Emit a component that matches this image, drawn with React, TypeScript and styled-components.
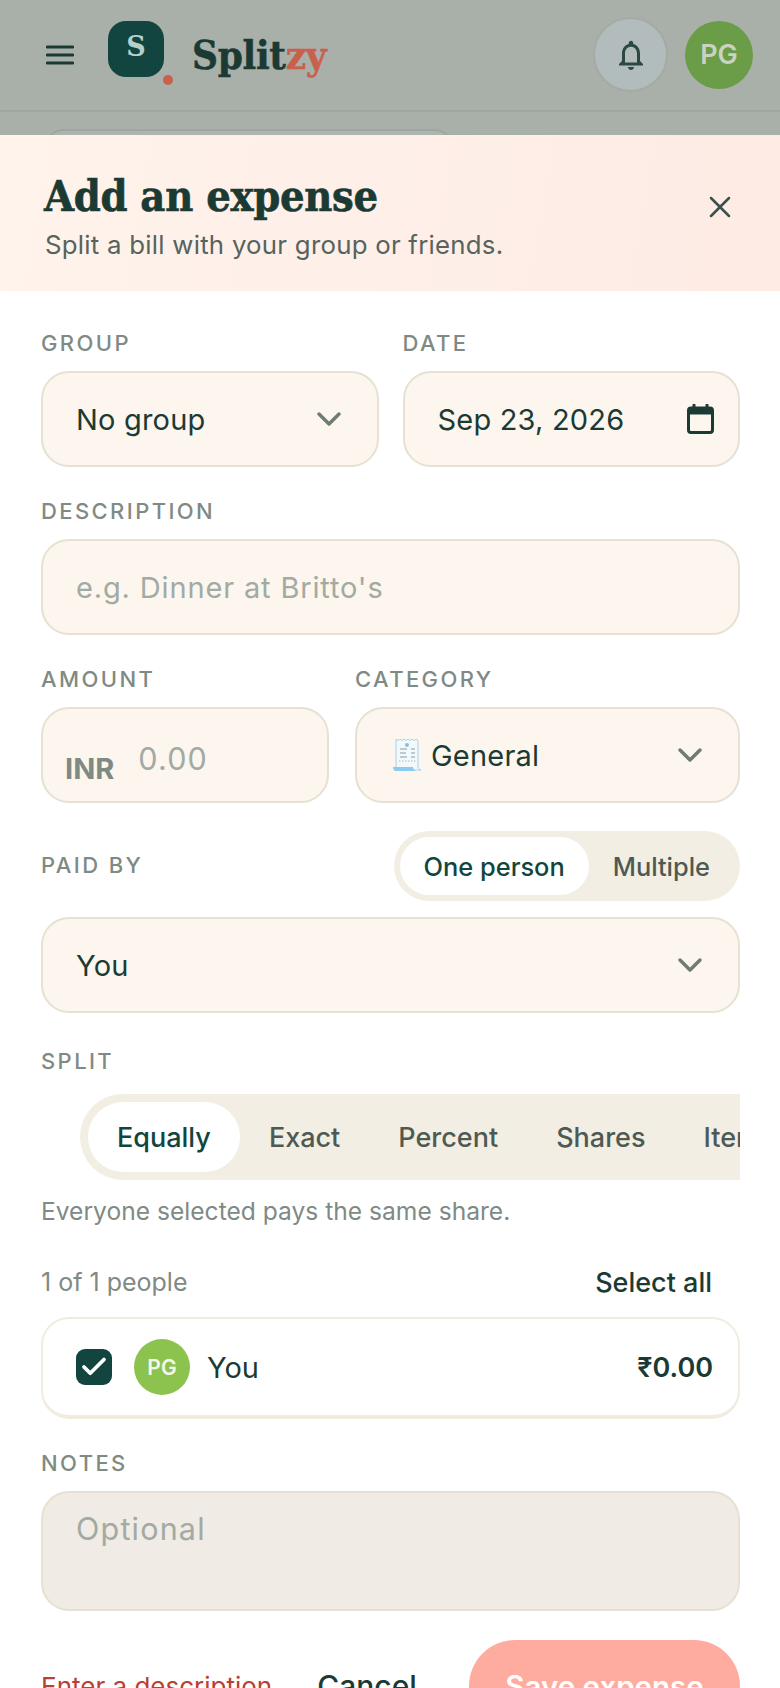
import React, { FC } from 'react';
import styled, { createGlobalStyle } from 'styled-components';
import { Check, ChevronDown, X } from 'lucide-react';

const ink = '#1c3a34';
const teal = '#12453f';
const muted = '#7f8a84';
const faint = '#a2aaa3';
const sans = `Inter, "Noto Sans", sans-serif`;
const serif = `"DejaVu Serif", "Liberation Serif", serif`;

const GlobalStyle = createGlobalStyle`
	* {
		box-sizing: border-box;
	}
	html,
	body {
		margin: 0;
		padding: 0;
		background: #fff;
		font-family: ${sans};
	}
`;

const BurgerIcon: FC = () => (
	<svg width="28" height="20" viewBox="0 0 28 20" fill="none">
		<path d="M1 2h26M1 10h26M1 18h26" stroke={ink} strokeWidth="2.8" strokeLinecap="round" />
	</svg>
);

const BellIcon: FC = () => (
	<svg width="36" height="36" viewBox="0 0 24 24" fill="#2b4841">
		<path d="M12 22c1.1 0 2-.9 2-2h-4c0 1.1.9 2 2 2zm6-6v-5c0-3.07-1.63-5.64-4.5-6.32V4c0-.83-.67-1.5-1.5-1.5s-1.5.67-1.5 1.5v.68C7.64 5.36 6 7.92 6 11v5l-2 2v1h16v-1l-2-2zm-2 1H8v-6c0-2.48 1.51-4.5 4-4.5s4 2.02 4 4.5v6z" />
	</svg>
);

// Small receipt, stands in for the category emoji
const ReceiptIcon: FC = () => (
	<svg width="30" height="34" viewBox="0 0 30 34" fill="none">
		<path d="M4 1l2 1.6L8 1l2 1.6L12 1l2 1.6L16 1l2 1.6L20 1l2 1.6L24 1l2 1.6V28c0 2 1 4 3 4H6c-2 0-2-2-2-4V1z" fill="#f3f8fb" stroke="#a5d3ee" strokeWidth="1" />
		<path d="M1 29h20c0 2 1 3 3 4H4c-2 0-3-2-3-4z" fill="#8ccbf0" />
		<circle cx="15" cy="7" r="2" fill="#8fc0d8" />
		<path d="M8 11h7M19 11h4M8 15h6M19 15h4M8 19h7M19 19h4" stroke="#a9bcc4" strokeWidth="1.4" />
		<path d="M7 23h17" stroke="#a9bcc4" strokeWidth="1.2" strokeDasharray="1.5 1.5" />
	</svg>
);

const CalendarIcon: FC = () => (
	<svg width="27" height="30" viewBox="0 0 27 30" fill="none">
		<path d="M7 1v4M20 1v4" stroke={ink} strokeWidth="3" strokeLinecap="round" />
		<rect x="1.5" y="4" width="24" height="24.5" rx="2.5" stroke={ink} strokeWidth="3" />
		<path d="M1.5 6A2 2 0 0 1 3.5 4h20a2 2 0 0 1 2 2v4.5h-24z" fill={ink} />
	</svg>
);

const App: FC = () => {
	return (
		<Page>
			<GlobalStyle />
			<AppBar>
				<Burger>
					<BurgerIcon />
				</Burger>
				<LogoMark>
					S
					<LogoDot />
				</LogoMark>
				<Brand>
					Split<BrandAccent>zy</BrandAccent>
				</Brand>
				<BarActions>
					<BellButton>
						<BellIcon />
					</BellButton>
					<UserAvatar>PG</UserAvatar>
				</BarActions>
			</AppBar>
			<PeekStrip>
				<PeekCard />
			</PeekStrip>

			<Sheet>
				<SheetHeader>
					<div>
						<Title>Add an expense</Title>
						<Subtitle>Split a bill with your group or friends.</Subtitle>
					</div>
					<CloseButton>
						<X size={36} strokeWidth={1.7} />
					</CloseButton>
				</SheetHeader>

				<SheetBody>
					<TwoCols>
						<div>
							<Label>Group</Label>
							<Field>
								<Value>No group</Value>
								<Caret size={40} strokeWidth={2.1} />
							</Field>
						</div>
						<div>
							<Label>Date</Label>
							<DateField>
								<Value>Sep 23, 2026</Value>
								<CalendarIcon />
							</DateField>
						</div>
					</TwoCols>

					<Section>
						<Label>Description</Label>
						<Field>
							<Placeholder>e.g. Dinner at Britto's</Placeholder>
						</Field>
					</Section>

					<AmountCols>
						<div>
							<Label>Amount</Label>
							<AmountField>
								<Currency>INR</Currency>
								<AmountPlaceholder>0.00</AmountPlaceholder>
							</AmountField>
						</div>
						<div>
							<Label>Category</Label>
							<CategoryField>
								<CategoryValue>
									<ReceiptIcon />
									<Value>General</Value>
								</CategoryValue>
								<Caret size={40} strokeWidth={2.1} />
							</CategoryField>
						</div>
					</AmountCols>

					<PaidRow>
						<InlineLabel>Paid by</InlineLabel>
						<Toggle>
							<ToggleItem $active>One person</ToggleItem>
							<ToggleItem>Multiple</ToggleItem>
						</Toggle>
					</PaidRow>
					<Field>
						<Value>You</Value>
						<Caret size={40} strokeWidth={2.1} />
					</Field>

					<SplitLabel>Split</SplitLabel>
					<TabScroller>
						<Tabs>
							<Tab $active>Equally</Tab>
							<Tab>Exact</Tab>
							<Tab>Percent</Tab>
							<Tab>Shares</Tab>
							<Tab>Items</Tab>
						</Tabs>
					</TabScroller>
					<Hint>Everyone selected pays the same share.</Hint>

					<PeopleRow>
						<PeopleCount>1 of 1 people</PeopleCount>
						<SelectAll>Select all</SelectAll>
					</PeopleRow>
					<PersonCard>
						<Checkbox>
							<Check size={30} strokeWidth={3} />
						</Checkbox>
						<PersonAvatar>PG</PersonAvatar>
						<PersonName>You</PersonName>
						<PersonAmount>₹0.00</PersonAmount>
					</PersonCard>

					<NotesSection>
						<Label>Notes</Label>
						<NotesBox>
							<WidePlaceholder>Optional</WidePlaceholder>
						</NotesBox>
					</NotesSection>

					<Footer>
						<ErrorText>Enter a description</ErrorText>
						<CancelButton>Cancel</CancelButton>
						<SaveButton>Save expense</SaveButton>
					</Footer>
				</SheetBody>
			</Sheet>
		</Page>
	);
};

export default App;

const Page = styled.div`
	width: 780px;
	height: 1688px;
	overflow: hidden;
	background: #a9b0aa;
	display: flex;
	flex-direction: column;
`;

const AppBar = styled.header`
	height: 112px;
	flex: none;
	display: flex;
	align-items: flex-start;
	padding: 17px 27px 0 46px;
	border-bottom: 2px solid #9fa69d;
`;

const Burger = styled.div`
	height: 20px;
	margin-top: 28px;
	line-height: 0;
`;

const LogoMark = styled.div`
	position: relative;
	width: 56px;
	height: 56px;
	margin: 4px 0 0 34px;
	border-radius: 18px;
	background: ${teal};
	color: #b5cfc9;
	font-family: ${serif};
	font-weight: 700;
	font-size: 27px;
	display: flex;
	align-items: center;
	justify-content: center;
	padding-bottom: 5px;
`;

const LogoDot = styled.span`
	position: absolute;
	right: -9px;
	bottom: -8px;
	width: 10px;
	height: 10px;
	border-radius: 50%;
	background: #c9604c;
`;

const Brand = styled.div`
	margin: 15px 0 0 28px;
	font-family: ${serif};
	font-stretch: condensed;
	font-weight: 700;
	font-size: 40px;
	line-height: 46px;
	letter-spacing: -0.3px;
	-webkit-text-stroke: 0.5px currentColor;
	color: ${ink};
`;

const BrandAccent = styled.span`
	color: #c9604c;
`;

const BarActions = styled.div`
	margin-left: auto;
	display: flex;
	align-items: center;
	gap: 17px;
`;

const BellButton = styled.div`
	width: 75px;
	height: 75px;
	border-radius: 50%;
	border: 2px solid #a5aba3;
	background: #b2bcbc;
	display: flex;
	align-items: center;
	justify-content: center;
`;

const UserAvatar = styled.div`
	width: 68px;
	height: 68px;
	border-radius: 50%;
	background: #6b9c47;
	color: #c9d3c0;
	font-size: 27px;
	font-weight: 600;
	display: flex;
	align-items: center;
	justify-content: center;
`;

const PeekStrip = styled.div`
	height: 23px;
	flex: none;
	padding: 17px 0 0 44px;
	overflow: hidden;
`;

const PeekCard = styled.div`
	width: 410px;
	height: 40px;
	border: 2px solid #9fa69d;
	border-radius: 26px;
	background: #aeb5b1;
`;

const Sheet = styled.section`
	flex: 1;
	min-height: 0;
	background: #fff;
`;

const SheetHeader = styled.div`
	height: 156px;
	padding: 36px 44px 0 44px;
	display: flex;
	justify-content: space-between;
	align-items: flex-start;
	background: linear-gradient(100deg, #fff3ec 0%, #fdebe4 100%);
`;

const Title = styled.h1`
	margin: 0;
	font-family: ${serif};
	font-stretch: condensed;
	font-weight: 700;
	font-size: 43px;
	line-height: 50px;
	letter-spacing: -0.3px;
	-webkit-text-stroke: 0.6px currentColor;
	color: ${ink};
`;

const Subtitle = styled.p`
	margin: 7px 0 0 1px;
	font-size: 25.8px;
	line-height: 34px;
	letter-spacing: 0.25px;
	color: #57635d;
`;

const CloseButton = styled.div`
	color: #3a4f49;
	height: 36px;
	margin: 18px -2px 0 0;
`;

const SheetBody = styled.div`
	padding: 41px 40px 0 41px;
`;

const TwoCols = styled.div`
	display: grid;
	grid-template-columns: 1fr 1fr;
	gap: 24px;
`;

const AmountCols = styled.div`
	display: grid;
	grid-template-columns: 288px 1fr;
	gap: 26px;
	margin-top: 33px;
`;

const Section = styled.div`
	margin-top: 33px;
`;

const NotesSection = styled.div`
	margin-top: 33px;
`;

const Label = styled.div`
	height: 24px;
	margin-bottom: 15px;
	font-size: 22px;
	line-height: 22px;
	font-weight: 500;
	letter-spacing: 2.4px;
	text-transform: uppercase;
	color: ${muted};
`;

const InlineLabel = styled(Label)`
	margin-bottom: 0;
`;

const SplitLabel = styled(Label)`
	margin: 37px 0 20px;
`;

const Field = styled.div`
	height: 96px;
	padding: 0 28px 0 33px;
	border: 2px solid #e6e1d2;
	border-radius: 28px;
	background: #fcf6ee;
	display: flex;
	align-items: center;
	justify-content: space-between;
`;

const DateField = styled(Field)`
	padding-right: 24px;
`;

const Value = styled.span`
	font-size: 29px;
	letter-spacing: 0.2px;
	color: ${ink};
`;

const Placeholder = styled.span`
	font-size: 29px;
	letter-spacing: 0.85px;
	color: ${faint};
`;

const WidePlaceholder = styled(Placeholder)`
	font-size: 30.5px;
	letter-spacing: 1.2px;
`;

const AmountPlaceholder = styled(WidePlaceholder)`
	margin-top: 31px;
`;

const Caret = styled(ChevronDown)`
	color: #6f7c75;
`;

const AmountField = styled(Field)`
	justify-content: flex-start;
	gap: 24px;
	padding: 0 0 0 22px;
	align-items: flex-start;
`;

const Currency = styled.span`
	font-size: 29px;
	font-weight: 700;
	color: ${muted};
	margin-top: 42px;
`;

const CategoryField = styled(Field)`
	padding-left: 35px;
`;

const CategoryValue = styled.div`
	display: flex;
	align-items: center;
	gap: 9px;
`;

const PaidRow = styled.div`
	margin: 28px 0 16px;
	height: 70px;
	display: flex;
	align-items: center;
	justify-content: space-between;
`;

const Toggle = styled.div`
	height: 70px;
	padding: 6px;
	border-radius: 35px;
	background: #f3eee3;
	display: flex;
	align-items: center;
`;

const ToggleItem = styled.div<{ $active?: boolean }>`
	height: 58px;
	padding: 0 24px;
	border-radius: 29px;
	background: ${(p) => (p.$active ? '#fff' : 'transparent')};
	color: ${(p) => (p.$active ? teal : '#4d5a54')};
	font-size: 25.4px;
	font-weight: 500;
	display: flex;
	align-items: center;
`;

const TabScroller = styled.div`
	padding-left: 39px;
	overflow: hidden;
`;

const Tabs = styled.div`
	width: max-content;
	height: 86px;
	padding: 8px;
	border-radius: 43px 0 0 43px;
	background: #f3eee3;
	display: flex;
	align-items: center;
`;

const Tab = styled.div<{ $active?: boolean }>`
	height: 70px;
	padding: 0 29px;
	border-radius: 35px;
	background: ${(p) => (p.$active ? '#fff' : 'transparent')};
	color: ${(p) => (p.$active ? teal : '#4d5a54')};
	font-size: 27px;
	font-weight: 500;
	display: flex;
	align-items: center;
`;

const Hint = styled.p`
	margin: 15px 0 0;
	font-size: 24.6px;
	line-height: 32px;
	color: ${muted};
`;

const PeopleRow = styled.div`
	margin-top: 39px;
	height: 32px;
	padding-right: 28px;
	display: flex;
	align-items: center;
	justify-content: space-between;
`;

const PeopleCount = styled.span`
	font-size: 25px;
	color: ${muted};
`;

const SelectAll = styled.span`
	font-size: 27px;
	font-weight: 500;
	color: ${ink};
`;

const PersonCard = styled.div`
	margin-top: 19px;
	height: 102px;
	padding: 0 25px 0 33px;
	border: 2px solid #f1ecdf;
	border-bottom-width: 4px;
	border-radius: 28px;
	display: flex;
	align-items: center;
`;

const Checkbox = styled.div`
	width: 36px;
	height: 36px;
	border-radius: 9px;
	background: ${teal};
	color: #fff;
	display: flex;
	align-items: center;
	justify-content: center;
`;

const PersonAvatar = styled.div`
	width: 56px;
	height: 56px;
	margin-left: 22px;
	border-radius: 50%;
	background: #8cc24e;
	color: #f3f8ea;
	font-size: 21px;
	font-weight: 600;
	display: flex;
	align-items: center;
	justify-content: center;
`;

const PersonName = styled.span`
	margin-left: 17px;
	font-size: 29px;
	color: ${ink};
`;

const PersonAmount = styled.span`
	margin-left: auto;
	font-size: 27px;
	font-weight: 600;
	color: ${ink};
`;

const NotesBox = styled.div`
	height: 120px;
	padding: 17px 33px;
	border: 2px solid #e6e1d2;
	border-radius: 28px;
	background: #f0ebe4;
`;

const Footer = styled.div`
	margin-top: 29px;
	display: flex;
	align-items: center;
`;

const ErrorText = styled.span`
	font-size: 26px;
	color: #b8412f;
`;

const CancelButton = styled.span`
	margin-left: 45px;
	font-size: 30px;
	font-weight: 500;
	color: ${ink};
`;

const SaveButton = styled.div`
	margin-left: auto;
	width: 271px;
	height: 92px;
	flex: none;
	border-radius: 46px;
	background: #ffaca0;
	color: #fff;
	font-size: 29.5px;
	font-weight: 600;
	display: flex;
	align-items: center;
	justify-content: center;
`;
